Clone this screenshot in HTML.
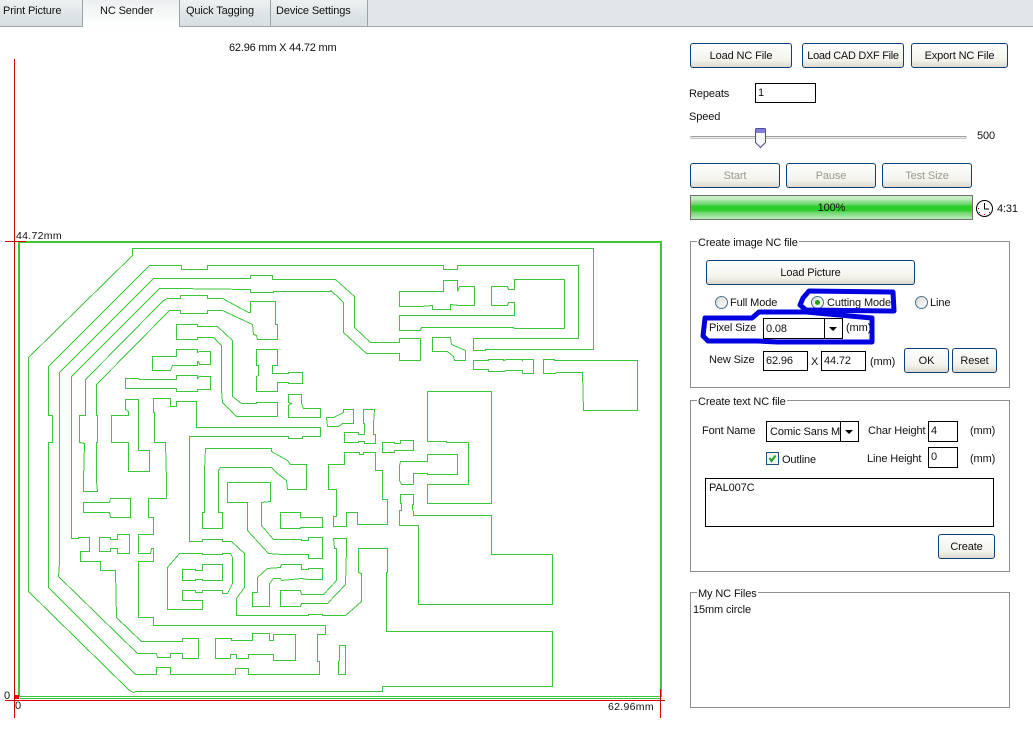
<!DOCTYPE html>
<html><head><meta charset="utf-8"><style>
html,body{margin:0;padding:0;background:#fff}
#p{position:relative;width:1033px;height:732px;overflow:hidden;background:#fff;font-family:"Liberation Sans",sans-serif;font-size:11px;letter-spacing:-.12px;color:#111}
.t{position:absolute;white-space:nowrap;line-height:14px;margin-top:1px}
.tab{position:absolute;top:0;height:26px;box-sizing:border-box;border-right:1px solid #9aa4a8;background:linear-gradient(#eef1f2,#dfe5e7 55%,#d8dfe1);}
.btn{position:absolute;box-sizing:border-box;border:1px solid #0c3f78;border-radius:3px;background:linear-gradient(#fff,#f3f2ec 70%,#dcd9cd);text-align:center;white-space:nowrap;line-height:25px;height:25px}
.dis{color:#9a9a92}
.box{position:absolute;box-sizing:border-box;border:1px solid #000;background:#fff;padding-left:2px;white-space:nowrap;overflow:hidden}
.grp{position:absolute;box-sizing:border-box;border:1px solid #8e8e92;left:690px;width:320px}
.gt{position:absolute;background:#fff;padding:0 1px;white-space:nowrap;line-height:14px;left:6px;top:-6px}
.rad{position:absolute;width:11px;height:11px;border:1px solid #48708f;border-radius:50%;background:linear-gradient(135deg,#dcdcd6,#fff)}
.arr{position:absolute;width:0;height:0;border-left:4px solid transparent;border-right:4px solid transparent;border-top:4px solid #000}
</style></head><body><div id="p">
<div style="position:absolute;left:0;top:0;width:1033px;height:26px;background:#e1e7e9;border-bottom:1px solid #a0a8ac"></div>
<div class="tab" style="left:0;width:83px;border-bottom:1px solid #a0a8ac;height:27px"></div>
<div style="position:absolute;left:83px;top:0;width:96px;height:27px;background:linear-gradient(#eceff0,#fff)"></div>
<div class="tab" style="left:179px;width:92px;border-left:1px solid #9aa4a8;border-bottom:1px solid #a0a8ac;height:27px"></div>
<div class="tab" style="left:271px;width:97px;border-bottom:1px solid #a0a8ac;height:27px"></div>
<div class="t" style="left:3px;top:3px">Print Picture</div>
<div class="t" style="left:100px;top:3px">NC Sender</div>
<div class="t" style="left:186px;top:3px">Quick Tagging</div>
<div class="t" style="left:276px;top:3px">Device Settings</div>
<div class="t" style="left:229px;top:40px;letter-spacing:-.2px">62.96 mm X 44.72 mm</div>

<svg style="position:absolute;left:0;top:0" width="680" height="732" shape-rendering="crispEdges">
<g fill="none" stroke="#3cc63c" stroke-width="1" transform="translate(.5,.5)">
<path d="M132 248H593V349H485V350H473V338H499L578 338V265H457V269H443V265H207V269H181V265H149L48 366V415H52V442H48V587L135 674H156V667H170V674H235V668H248V674H319V661H317V634H325V625H153V617H138V561H153V548H151L150 553H138V534H153V517H148V498H166V480L165 442H154V412H153V398H170V406H176V401H196V427H320V436H302V438H288V436H189V541H202V539H222V541H231L244 553V587L236 598V615H308V614H322V615H345L361 601V573L358 572V548H387V572H386V631H552V686H382V691H135L133 692L129 690L28 591V357L132 255Z"/>
<path d="M153 278H250V275H272V279H335L354 296V327L370 342H399V338H420V360H399V353H366L343 332V302L337 296L330 290L332 291H273V292H250V289L173 288H159L71 376V538H78V537H89V551H80V561H100V570H115L116 617L141 641H182V638H198V658H182V653H170V657H157L156 653H137L58 576L59 562V372Z"/>
<path d="M85 379L163 300L167 298H180V295H207V298H222L248 312H250V301H275V324H277V339H257L256 335L253 334L252 324L222 310H207V313H180V310H169L96 384V415H97V442H96V480L97 491H83V480L84 443L79 442V415H85Z"/>
<path d="M176 324H197V326H217L232 340V396L241 403H256V402H277V416H236L222 402L221 390V345L213 337H197V339H176Z"/>
<path d="M152 356H176V349H197V352L199 351H210V364H199L198 361H197V365H172L170 370H152Z"/>
<path d="M125 378H138L139 379H176V375H197V378L199 376H210V389H197V391H176V388H125Z"/>
<path d="M256 349H277V365H272V373H288V372H302V383H288V382H277V391H256V376L258 375V365H256Z"/>
<path d="M288 394H301V403L303 408H308H320V417H288V405L291 403L288 402Z"/>
<path d="M125 399H138V450H149V471H128V442H111V415H128V411L125 409Z"/>
<path d="M205 448H271V451L287 460L290 464H306V489H287L286 480L277 473L271 467H220L218 470V512H222V528H202V512H204V470Z"/>
<path d="M227 482H270V501L261 502V525L273 539H301V540H308V537H322V558H308V554H282L268 553L247 530V502H227Z"/>
<path d="M280 512H300V517H322V527H300V528H280Z"/>
<path d="M83 502H109L110 498H130V517H110L109 512H83Z"/>
<path d="M99 537H110V539H117V534H129V553H117V548H110V551H99Z"/>
<path d="M179 553H202V554H222V553H230L232 557V583L227 593H222V590H202V592H195V590H182V600H202V609H167V567Z"/>
<path d="M182 569H195V570H202V564H222V580H202V579H195V580H182Z"/>
<path d="M252 592H257V577L267 568L280 567L281 564H301V569H308V568H322V579H308L301 578L281 580L280 578H273L269 583V606H252Z"/>
<path d="M280 590H300L301 594H323L336 580V548H334L333 538H346V548L345 584L327 603H301L300 606H280Z"/>
<path d="M328 464H344V452H359V454H363V452H375V470H382V499H387V524H357V512H346V526H333V516H336V489H328Z"/>
<path d="M326 417H333L339 414L343 412V409H353V423H342L338 426H327Z"/>
<path d="M363 409H374L373 423V434H375V443H364V441H358V442H344V432H358V434H364V423H363Z"/>
<path d="M382 442H394V443H400V440H413V450H394V452H382Z"/>
<path d="M427 391H491V503H427V484H468V442H446V441H427Z"/>
<path d="M427 454H457V474H427V473H413V484H401L399 480V465L400 461H427Z"/>
<path d="M400 494H413V504H412V509L413 511V515H491V554H552V604H418V525H399V510H401V503H400Z"/>
<path d="M339 645H345V674H338V661L339 660Z"/>
<path d="M215 638H231V640H252V633H269V640H273V634H295V660H273V654H248V658H236V654H230V658H215Z"/>
<path d="M399 291H443V280H457V291L459 286H474V305H459L450 304V309H432V305L421 306H399Z"/>
<path d="M491 286H507L508 289H514V279H564V328H514L513 327H421L420 330H399V315H514V302H508L507 305H491Z"/>
<path d="M432 337H450L451 344L458 347L465 350V360H454L453 356L447 351H432Z"/>
<path d="M473 360H488V359H503V360L506 359H521L522 360V359H533V373H522V370H506L503 371H488V369H473Z"/>
<path d="M543 359H554V360H637V410H583L582 372H556L555 373H543Z"/>
<path d="M19 696H661M19 698H661"/>
</g>
<rect x="18" y="241" width="2" height="456" fill="#3cc63c"/>
<rect x="18" y="241" width="644" height="2" fill="#3cc63c"/>
<rect x="660" y="241" width="2" height="456" fill="#3cc63c"/>
<rect x="14" y="59" width="1" height="659" fill="#d00000"/>
<rect x="5" y="241" width="21" height="1" fill="#d00000"/>
<rect x="5" y="700" width="660" height="1" fill="#e00000"/>
<rect x="660" y="689" width="1" height="29" fill="#d00000"/>
<rect x="15" y="695" width="4" height="4" fill="#e00000"/>
</svg>
<div class="t" style="left:16px;top:228px;font-size:10.5px;letter-spacing:.3px">44.72mm</div>
<div class="t" style="left:4px;top:688px">0</div>
<div class="t" style="left:15px;top:698px">0</div>
<div class="t" style="left:608px;top:699px;font-size:10.5px;letter-spacing:.3px">62.96mm</div>

<div class="btn" style="left:690px;top:43px;width:102px">Load NC File</div>
<div class="btn" style="left:802px;top:43px;width:102px;letter-spacing:-.3px">Load CAD DXF File</div>
<div class="btn" style="left:911px;top:43px;width:97px">Export NC File</div>
<div class="t" style="left:689px;top:86px">Repeats</div>
<div class="box" style="left:755px;top:83px;width:61px;height:20px;line-height:18px">1</div>
<div class="t" style="left:689px;top:109px">Speed</div>
<div style="position:absolute;left:690px;top:136px;width:277px;height:3px;box-sizing:border-box;border:1px solid #c4c4c0;border-top-color:#9c9c98;background:#eee;border-radius:2px"></div>
<svg style="position:absolute;left:754px;top:127px" width="13" height="22"><path d="M1.500 2.500Q1.500 1.500 2.500 1.500H10.500Q11.500 1.500 11.500 2.500V15.500L6.500 20.500L1.500 15.500Z" fill="#f6f6fb" stroke="#4d4d98"/><rect x="2" y="2" width="9" height="4" fill="#8080d8"/></svg>
<div class="t" style="left:977px;top:128px">500</div>
<div class="btn dis" style="left:690px;top:163px;width:90px">Start</div>
<div class="btn dis" style="left:786px;top:163px;width:90px">Pause</div>
<div class="btn dis" style="left:882px;top:163px;width:90px">Test Size</div>
<div style="position:absolute;left:690px;top:195px;width:283px;height:25px;box-sizing:border-box;border:1px solid #707070;background:linear-gradient(#c8eec8 0,#bdecbd 16%,#8fe08f 24%,#6fd86f 36%,#2fce2f 44%,#2fce2f 64%,#6fd86f 72%,#8fe08f 84%,#bdecbd 100%);text-align:center;line-height:25px">100%</div>
<svg style="position:absolute;left:975px;top:199px" width="19" height="19"><circle cx="9.500" cy="9.500" r="8" fill="#fff" stroke="#000"/><path d="M9.500 4V10H14" fill="none" stroke="#000"/><g fill="#d00000"><rect x="9" y="15" width="1" height="1"/><rect x="4" y="13" width="1" height="1"/><rect x="14" y="13" width="1" height="1"/><rect x="3" y="9" width="1" height="1"/></g></svg>
<div class="t" style="left:997px;top:201px">4:31</div>

<div class="grp" style="top:241px;height:147px"><div class="gt">Create image NC file</div></div>
<div class="btn" style="left:706px;top:260px;width:209px">Load Picture</div>
<div class="rad" style="left:715px;top:296px"></div><div class="t" style="left:730px;top:295px">Full Mode</div>
<div class="rad" style="left:811px;top:296px"></div><div style="position:absolute;left:815px;top:300px;width:5px;height:5px;border-radius:50%;background:#1ca01c"></div><div class="t" style="left:827px;top:295px">Cutting Mode</div>
<div class="rad" style="left:915px;top:296px"></div><div class="t" style="left:930px;top:295px">Line</div>
<div class="t" style="left:709px;top:320px">Pixel Size</div>
<div class="box" style="left:763px;top:318px;width:80px;height:21px;line-height:20px">0.08</div>
<div style="position:absolute;left:824px;top:318px;width:1px;height:21px;background:#000"></div>
<div class="arr" style="left:829px;top:327px"></div>
<div class="t" style="left:846px;top:320px">(mm)</div>
<svg style="position:absolute;left:0;top:0" width="1033" height="732"><path d="M800 305L803 298L809 291L893 292L894 311L806 310ZM705 318H752L759 312H806L872 318V342H777L757 341H708L703 336Z" fill="none" stroke="#0000e0" stroke-width="5" stroke-linejoin="round"/></svg>
<div class="t" style="left:709px;top:352px">New Size</div>
<div class="box" style="left:763px;top:351px;width:45px;height:20px;line-height:19px">62.96</div>
<div class="t" style="left:811px;top:354px">X</div>
<div class="box" style="left:821px;top:351px;width:45px;height:20px;line-height:19px">44.72</div>
<div class="t" style="left:870px;top:354px">(mm)</div>
<div class="btn" style="left:904px;top:348px;width:45px">OK</div>
<div class="btn" style="left:952px;top:348px;width:45px">Reset</div>

<div class="grp" style="top:400px;height:172px"><div class="gt">Create text NC file</div></div>
<div class="t" style="left:702px;top:423px">Font Name</div>
<div class="box" style="left:766px;top:421px;width:93px;height:21px;line-height:21px;padding-left:3px">Comic Sans MS</div>
<div style="position:absolute;left:840px;top:422px;width:18px;height:19px;background:#fff;border-left:1px solid #000;box-sizing:border-box"></div>
<div class="arr" style="left:845px;top:430px"></div>
<div class="t" style="left:868px;top:423px">Char Height</div>
<div class="box" style="left:928px;top:421px;width:30px;height:21px;line-height:19px">4</div>
<div class="t" style="left:970px;top:423px">(mm)</div>
<svg style="position:absolute;left:766px;top:452px" width="14" height="14"><rect x=".5" y=".5" width="12" height="12" fill="#f4f4f0" stroke="#1c5180"/><path d="M3.500 6L5.500 9L9.500 3.500" fill="none" stroke="#21a121" stroke-width="2"/></svg>
<div class="t" style="left:782px;top:452px">Outline</div>
<div class="t" style="left:867px;top:451px">Line Height</div>
<div class="box" style="left:928px;top:447px;width:30px;height:21px;line-height:18px">0</div>
<div class="t" style="left:970px;top:451px">(mm)</div>
<div class="box" style="left:705px;top:478px;width:289px;height:49px;line-height:18px;padding-left:3px">PAL007C</div>
<div class="btn" style="left:938px;top:534px;width:57px">Create</div>

<div class="grp" style="top:592px;height:116px"><div class="gt">My NC Files</div></div>
<div class="t" style="left:693px;top:602px">15mm circle</div>
</div></body></html>
